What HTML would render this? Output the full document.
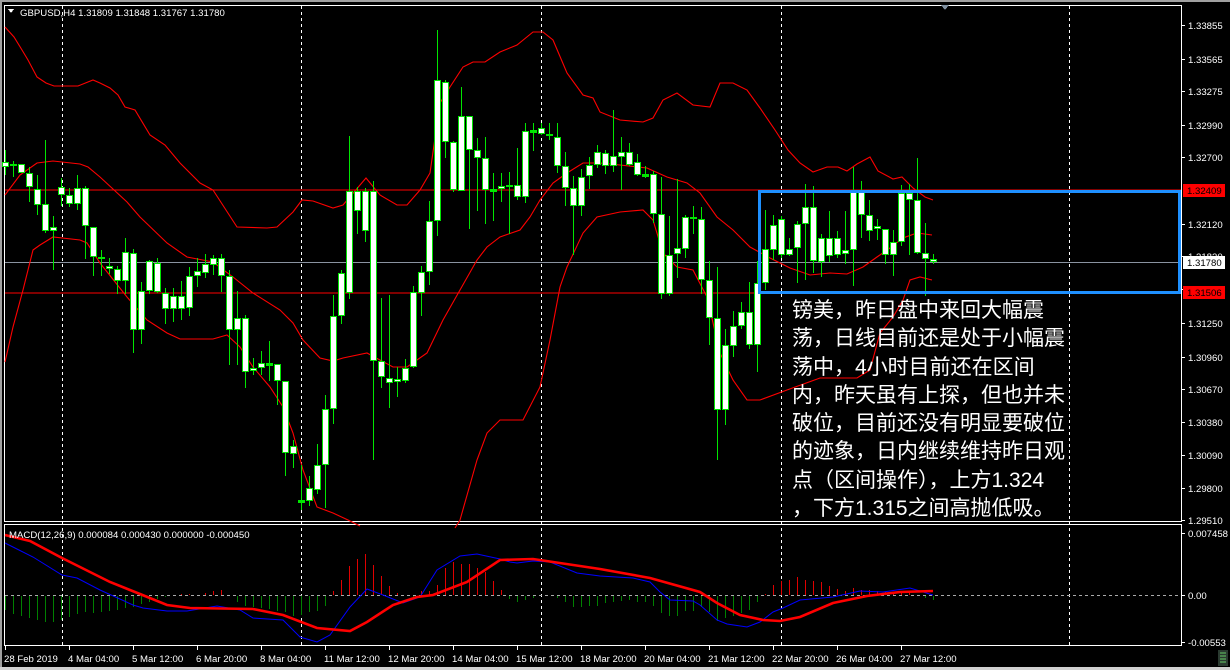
<!DOCTYPE html>
<html><head><meta charset="utf-8"><style>
html,body{margin:0;padding:0;background:#000;width:1230px;height:670px;overflow:hidden}
svg{position:absolute;left:0;top:0}
.t{font-family:"Liberation Sans",Arial,sans-serif;font-size:9.6px;fill:#fff}
#txt{position:absolute;left:792px;top:297px;width:300px;color:#fff;font-family:"Liberation Sans","Noto Sans CJK SC",sans-serif;font-size:21px;line-height:28.3px;white-space:nowrap}
</style></head><body>
<svg id="s" width="1230" height="670" xmlns="http://www.w3.org/2000/svg" shape-rendering="crispEdges">
<rect x="0" y="0" width="1230" height="670" fill="#000"/>
<rect x="0" y="0" width="1230" height="2" fill="#a0a0a0"/>
<rect x="0" y="0" width="2" height="670" fill="#a0a0a0"/>
<rect x="0" y="667" width="1230" height="3" fill="#d0d0d0"/>
<g stroke="#fff" stroke-width="1" fill="none">
<rect x="4.5" y="5.5" width="1177" height="516"/>
<rect x="4.5" y="524.5" width="1177" height="121"/>
</g>
<g stroke="#fff" stroke-width="1" stroke-dasharray="3,3">
<line x1="62.5" y1="6" x2="62.5" y2="646"/>
<line x1="301.5" y1="6" x2="301.5" y2="646"/>
<line x1="541.5" y1="6" x2="541.5" y2="646"/>
<line x1="781.5" y1="6" x2="781.5" y2="646"/>
<line x1="1069.5" y1="6" x2="1069.5" y2="646"/>
</g>
<polygon points="941,5 949,5 945,10" fill="#8090a0"/>
<line x1="5" y1="190" x2="1181" y2="190" stroke="#f00" stroke-width="1.3"/>
<line x1="5" y1="262.5" x2="1181" y2="262.5" stroke="#8a93a0" stroke-width="1"/>
<line x1="5" y1="293" x2="1181" y2="293" stroke="#f00" stroke-width="1"/>
<g id="bands" fill="none" stroke="#f00" stroke-width="1.1" shape-rendering="auto">
<polyline points="5,27 14,37 22,50 28,60 37,77 46,83 54,86 78,86 93,80 100,83 110,88 118,95 125,107 135,110 150,135 165,145 180,163 200,183 213,190 237,227 267,228 277,227 293,212 302,200 313,201 333,208 343,205 366,178 380,195 397,205 407,205 420,190 430,173 440,103 450,87 463,67 473,62 485,62 500,52 517,45 533,32 543,32 553,40 567,73 583,95 593,98 600,112 620,120 643,122 653,118 663,100 677,93 693,105 710,107 720,83 733,83 747,90 760,108 775,130 788,150 800,163 813,172 827,167 838,167 847,171 857,164 870,157 878,171 893,179 902,177 913,188 925,197 933,200"/>
<polyline points="5,195 20,175 37,163 53,161 80,164 88,167 100,177 127,202 140,217 167,243 187,257 213,262 233,277 253,293 280,310 293,323 303,340 320,358 333,361 343,358 367,353 393,367 407,367 427,353 443,320 460,290 477,260 487,247 500,237 520,230 530,217 540,200 553,183 567,173 583,163 600,163 620,165 647,168 667,177 687,183 700,193 717,217 733,230 750,247 770,258 790,268 810,275 830,273 847,274 863,267 877,257 890,248 903,238 917,233 932,235"/>
<polyline points="5,362 13,327 23,290 33,250 40,245 53,237 80,240 87,243 100,263 127,297 147,320 167,333 180,339 213,339 227,335 240,347 253,367 270,387 283,407 293,433 303,470 317,507 333,513 348,520 360,526"/>
<polyline points="455,528 460,520 477,460 487,433 500,420 523,420 540,387 550,340 560,287 567,267 583,233 597,217 620,212 643,210 653,220 663,253 677,267 693,270 707,297 720,353 733,380 747,400 760,400 787,390 820,378 857,378 870,370 880,333 893,317 903,300 910,280 920,277 932,280"/>
</g>
<g id="candles"></g>
<rect x="759.5" y="191.5" width="420" height="101" fill="none" stroke="#1e90ff" stroke-width="3"/>
<g id="hist"></g>
<line x1="5" y1="595.5" x2="1181" y2="595.5" stroke="#aaa" stroke-dasharray="3,3"/>
<polyline shape-rendering="auto" fill="none" stroke="#0000ff" stroke-width="1" points="5,543 33,557 62,575 77,578 100,590 133,605 143,608 167,611 187,611 217,606 240,610 253,618 283,620 300,637 317,642 330,635 350,607 367,589 383,595 403,603 420,597 437,570 460,556 477,554 500,559 510,562 517,563 533,561 550,562 577,573 600,576 633,578 650,582 660,592 670,600 693,601 700,605 717,620 727,624 747,627 760,622 773,612 783,608 800,600 833,597 860,591 883,592 910,588 933,595"/>
<polyline shape-rendering="auto" fill="none" stroke="#f00" stroke-width="2.6" points="5,535 30,541 62,558 110,582 140,594 167,605 190,608 253,609 283,615 317,628 350,631 367,622 393,605 417,597 433,595 467,582 500,560 533,559 600,569 650,578 700,592 717,603 740,615 763,620 780,621 800,617 833,603 867,596 900,592 933,591"/>
<g class="t">
<text x="20" y="16">GBPUSD,H4  1.31809 1.31848 1.31767 1.31780</text>
<text x="9" y="538">MACD(12,26,9) 0.000084 0.000430 0.000000 -0.000450</text>
</g>
<polygon points="8,9 14,9 11,13" fill="#fff"/>
<g id="axis" class="t"></g>
<g id="time" class="t"></g>
<rect x="1218" y="650" width="10" height="16" fill="#2a3a30"/>
<g stroke="#6c6" stroke-width="1"><line x1="1220" y1="653" x2="1226" y2="653"/><line x1="1220" y1="656" x2="1226" y2="656"/><line x1="1220" y1="659" x2="1226" y2="659"/><line x1="1220" y1="662" x2="1226" y2="662"/></g>
</svg>
<div id="txt">镑美，昨日盘中来回大幅震<br>荡，日线目前还是处于小幅震<br>荡中，4小时目前还在区间<br>内，昨天虽有上探，但也并未<br>破位，目前还没有明显要破位<br>的迹象，日内继续维持昨日观<br>点（区间操作），上方1.324<br>，下方1.315之间高抛低吸。</div>
<script>
var NS="http://www.w3.org/2000/svg";
function el(p,t,a){var e=document.createElementNS(NS,t);for(var k in a)e.setAttribute(k,a[k]);p.appendChild(e);return e;}
var C=[[5,162,167,150,175],[13,164,166,161,177],[21,164,173,164,173],[29,173,187,167,202],[37,189,205,175,215],[45,204,231,140,233],[53,227,231,216,270],[61,187,195,178,206],[69,195,204,188,207],[77,188,204,175,210],[85,188,226,186,259],[93,227,257,227,276],[101,257,259,250,276],[109,266,269,258,274],[117,269,281,266,294],[125,252,281,238,294],[133,253,330,249,353],[141,291,330,282,344],[149,261,291,260,294],[157,263,292,258,293],[165,293,309,288,324],[173,296,309,288,322],[181,296,309,281,320],[189,276,308,267,316],[197,271,276,258,287],[205,264,273,254,278],[213,258,265,255,275],[221,258,276,254,292],[229,276,330,270,365],[237,318,330,291,365],[245,318,372,315,388],[253,368,371,358,375],[261,363,368,351,375],[269,364,364,341,381],[277,364,381,364,405],[285,381,453,381,476],[293,446,454,440,468],[301,501,502,465,510],[309,488,501,476,506],[317,465,490,444,494],[325,409,465,395,508],[333,316,409,295,424],[341,273,316,270,324],[349,191,293,136,299],[357,191,211,187,234],[365,191,231,188,242],[373,191,361,181,460],[381,361,377,298,388],[389,378,383,295,408],[397,379,382,367,397],[405,368,381,359,383],[413,292,367,286,368],[421,272,293,266,316],[429,221,272,201,285],[437,80,221,30,236],[445,82,142,80,158],[453,142,190,141,192],[461,116,191,87,191],[469,116,150,116,229],[477,150,158,138,211],[485,158,190,137,224],[493,190,191,173,221],[501,186,189,173,202],[509,185,187,172,234],[517,185,197,148,200],[525,131,197,123,203],[533,131,131,123,151],[541,128,134,123,135],[549,134,136,123,140],[557,137,166,123,173],[565,166,188,152,206],[573,188,206,176,255],[581,177,206,169,216],[589,165,176,157,189],[597,152,165,145,168],[605,153,166,150,174],[613,156,166,110,172],[621,152,157,137,190],[629,152,165,143,166],[637,162,175,154,176],[645,175,175,166,178],[653,174,214,171,223],[661,214,294,177,299],[669,255,294,216,296],[677,248,254,179,278],[685,217,249,215,258],[693,217,219,206,234],[701,219,280,207,294],[709,280,318,261,345],[717,318,410,267,460],[725,345,410,329,425],[733,326,346,311,357],[741,312,326,302,329],[749,312,345,282,349],[757,283,345,261,372],[765,249,283,210,290],[773,225,250,215,260],[781,219,255,216,258],[789,249,255,238,256],[797,224,248,221,283],[805,207,224,184,280],[813,207,261,186,273],[821,238,262,234,277],[829,238,256,211,262],[837,238,255,231,258],[845,250,254,211,264],[853,191,250,167,286],[861,191,215,181,238],[869,215,231,200,241],[877,226,229,219,240],[885,229,255,229,264],[893,242,255,230,276],[901,193,242,185,246],[909,193,200,184,255],[917,200,253,158,254],[925,253,259,223,296],[933,259,262,254,264]];
var g=document.getElementById("candles");
C.forEach(function(c){el(g,"rect",{x:c[0],y:c[3],width:1,height:c[4]-c[3],fill:"#00e600"});
if(c[2]-c[1]<2){el(g,"rect",{x:c[0]-3,y:c[1]-1,width:7,height:3,fill:"#00e600"});}
else {el(g,"rect",{x:c[0]-3,y:c[1],width:7,height:c[2]-c[1],fill:"#00e600"});el(g,"rect",{x:c[0]-2,y:c[1]+1,width:5,height:Math.max(0,c[2]-c[1]-2),fill:"#fff"});}});
var H=[-14,-18,-20,-22,-24,-26,-26,-24,-21,-18,-16,-17,-16,-15,-14,-12,-11,-8,-6,-3,-1,0,1,1,0,2,4,5,0,-6,-10,-11,-12,-13,-15,-16,-20,-19,-16,-15,-10,4,15,29,36,41,30,19,9,2,0,-1,4,4,10,27,33,31,31,27,23,14,5,-3,-6,-4,-2,0,0,-2,-6,-11,-11,-10,-10,-7,-6,-5,-4,-6,-6,-10,-17,-20,-20,-15,-15,-11,-16,-25,-22,-20,-17,-14,-6,1,10,14,15,18,15,14,13,9,6,4,7,5,5,4,3,1,2,3,0,-2,-4];
var hg=document.getElementById("hist");
H.forEach(function(h,i){if(!h)return;var x=5+8*i;el(hg,"rect",{x:x,y:h>0?595-h:596,width:1,height:Math.abs(h),fill:h>0?"#e00000":"#008000"});});
var ax=document.getElementById("axis");
[["1.33855",25],["1.33565",59],["1.33275",91],["1.32990",125],["1.32700",157],["1.32120",224],["1.31830",256],["1.31540",289],["1.31250",323],["1.30960",357],["1.30670",389],["1.30380",422],["1.30090",455],["1.29800",488],["1.29510",520],["0.007458",533],["0.00",595],["-0.00553",642]].forEach(function(l){
el(ax,"line",{x1:1182,y1:l[1]+0.5,x2:1185,y2:l[1]+0.5,stroke:"#fff"});var t=el(ax,"text",{x:1188,y:l[1]+4});t.textContent=l[0];});
[["1.32409",190,"#f00","#000"],["1.31780",262,"#fff","#000"],["1.31506",292,"#f00","#000"]].forEach(function(l){
el(ax,"rect",{x:1183,y:l[1]-6,width:42,height:13,fill:l[2]});var t=el(ax,"text",{x:1187,y:l[1]+4,fill:l[3]});t.textContent=l[0];});
var tg=document.getElementById("time");
["28 Feb 2019","4 Mar 04:00","5 Mar 12:00","6 Mar 20:00","8 Mar 04:00","11 Mar 12:00","12 Mar 20:00","14 Mar 04:00","15 Mar 12:00","18 Mar 20:00","20 Mar 04:00","21 Mar 12:00","22 Mar 20:00","26 Mar 04:00","27 Mar 12:00"].forEach(function(s,i){
var x=5+64*i;el(tg,"line",{x1:x+0.5,y1:646,x2:x+0.5,y2:650,stroke:"#fff"});var t=el(tg,"text",{x:i==0?4:x-1,y:662});t.textContent=s;});
</script>
</body></html>
